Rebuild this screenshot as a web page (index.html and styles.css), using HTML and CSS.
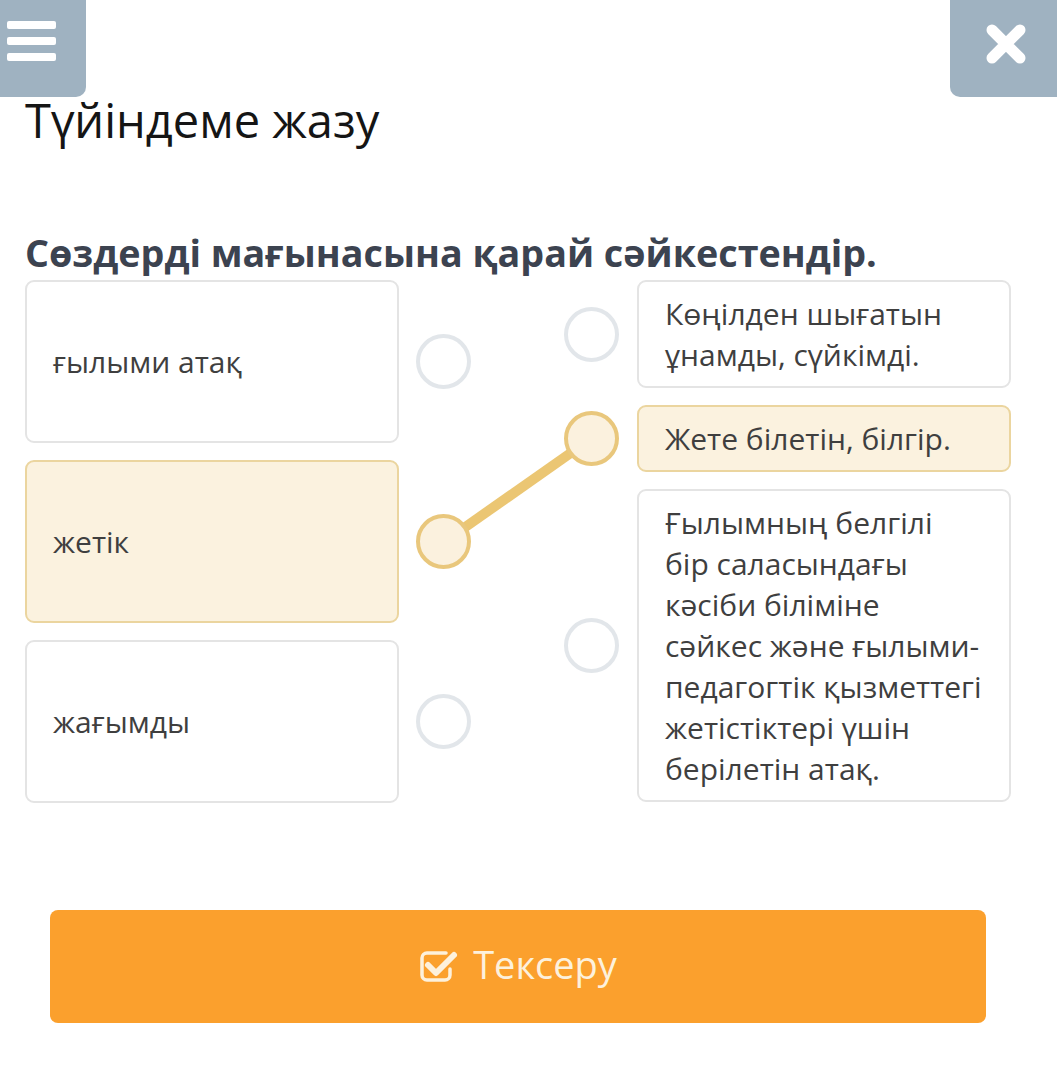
FILE: index.html
```html
<!DOCTYPE html>
<html lang="kk">
<head>
<meta charset="utf-8">
<title>Түйіндеме жазу</title>
<link rel="stylesheet" href="styles.css">
</head>
<body>
<div class="menu-btn">
  <span class="bar"></span><span class="bar"></span><span class="bar"></span>
</div>
<div class="close-btn">
  <svg width="40" height="40" viewBox="0 0 40 40"><path d="M6 6 L34 34 M34 6 L6 34" stroke="#fff" stroke-width="11" stroke-linecap="round"/></svg>
</div>
<main class="page">
  <h1 class="title">Түйіндеме жазу</h1>
  <h2 class="task">Сөздерді мағынасына қарай сәйкестендір.</h2>
  <div class="match">
    <svg class="link" width="1057" height="530" viewBox="0 0 1057 530">
      <line x1="444" y1="262" x2="592" y2="158" stroke="#ebc673" stroke-width="10"/>
    </svg>
    <div class="col">
      <div class="row">
        <div class="card tall">ғылыми атақ</div>
        <span class="dot"></span>
      </div>
      <div class="row">
        <div class="card tall on">жетік</div>
        <span class="dot on"></span>
      </div>
      <div class="row">
        <div class="card tall">жағымды</div>
        <span class="dot"></span>
      </div>
    </div>
    <div class="col right">
      <div class="row">
        <span class="dot"></span>
        <div class="card">Көңілден шығатын ұнамды, сүйкімді.</div>
      </div>
      <div class="row">
        <span class="dot on"></span>
        <div class="card on">Жете білетін, білгір.</div>
      </div>
      <div class="row">
        <span class="dot"></span>
        <div class="card">Ғылымның белгілі бір саласындағы кәсіби біліміне сәйкес және ғылыми-педагогтік қызметтегі жетістіктері үшін берілетін атақ.</div>
      </div>
    </div>
  </div>
  <button class="check" type="button">
    <svg width="40" height="36" viewBox="0 0 40 36"><path d="M27 5 H8 a5 5 0 0 0 -5 5 V27 a5 5 0 0 0 5 5 H26 a5 5 0 0 0 5 -5 V21" fill="none" stroke="#fdf1dc" stroke-width="3.5" stroke-linecap="round"/><path d="M9 17 L17 25 L35 7" fill="none" stroke="#fdf1dc" stroke-width="6" stroke-linecap="round" stroke-linejoin="round"/></svg>
    <span>Тексеру</span>
  </button>
</main>
</body>
</html>
```

FILE: styles.css
```css
* { box-sizing: border-box; }
html, body { margin: 0; padding: 0; background: #fff; }
body {
  font-family: "Open Sans", "Noto Sans", "DejaVu Sans", sans-serif;
  width: 1057px;
  height: 1084px;
  overflow: hidden;
  position: relative;
}
.menu-btn {
  position: absolute;
  left: 0; top: 0;
  width: 86px; height: 97px;
  background: #9fb2c1;
  border-bottom-right-radius: 10px;
  padding: 21px 0 0 7px;
  display: flex;
  flex-direction: column;
  gap: 8px;
}
.bar {
  display: block;
  width: 49px; height: 8px;
  background: #fff;
  border-radius: 2px;
}
.close-btn {
  position: absolute;
  right: 0; top: 0;
  width: 107px; height: 97px;
  background: #9fb2c1;
  border-bottom-left-radius: 10px;
  display: flex;
  align-items: center;
  justify-content: center;
  padding: 0 0 10px 4px;
}
.page { padding: 0 0 0 25px; }
.title {
  margin: 89px 0 0;
  font-size: 47px;
  font-weight: 400;
  line-height: 62px;
  color: #151515;
}
.task {
  margin: 77px 0 0;
  font-size: 37.7px;
  font-weight: 700;
  line-height: 50px;
  color: #3c4350;
}
.match {
  position: relative;
  margin-top: 2px;
  width: 986px;
  display: flex;
  justify-content: space-between;
  align-items: flex-start;
}
.link {
  position: absolute;
  left: -25px; top: 0;
  pointer-events: none;
}
.col { display: flex; flex-direction: column; gap: 17px; }
.row { display: flex; align-items: center; gap: 17px; position: relative; }
.col.right .row { gap: 18px; }
.card {
  width: 374px;
  border: 2px solid #e4e4e4;
  border-radius: 9px;
  background: #fff;
  padding: 11px 27px 11px 26px;
  font-size: 30px;
  line-height: 41px;
  color: #3f3f3f;
}
.card.tall {
  height: 163px;
  display: flex;
  align-items: center;
}
.card.on { background: #fbf2df; border-color: #ebd59f; }
.dot {
  width: 55px; height: 55px;
  border-radius: 50%;
  border: 4px solid #e2e6ea;
  background: #fff;
  flex: none;
  position: relative;
  z-index: 1;
}
.dot.on { border-color: #e9c77c; background: #fbf1de; }
.check {
  margin: 107px 0 0 25px;
  width: 936px;
  height: 113px;
  border: none;
  border-radius: 8px;
  background: #fba02d;
  display: flex;
  align-items: center;
  justify-content: center;
  gap: 14px;
  font-family: inherit;
  font-size: 38px;
  color: #fdf1dc;
  padding: 0 0 6px 0;
}
.check svg { margin-top: 4px; }
```
